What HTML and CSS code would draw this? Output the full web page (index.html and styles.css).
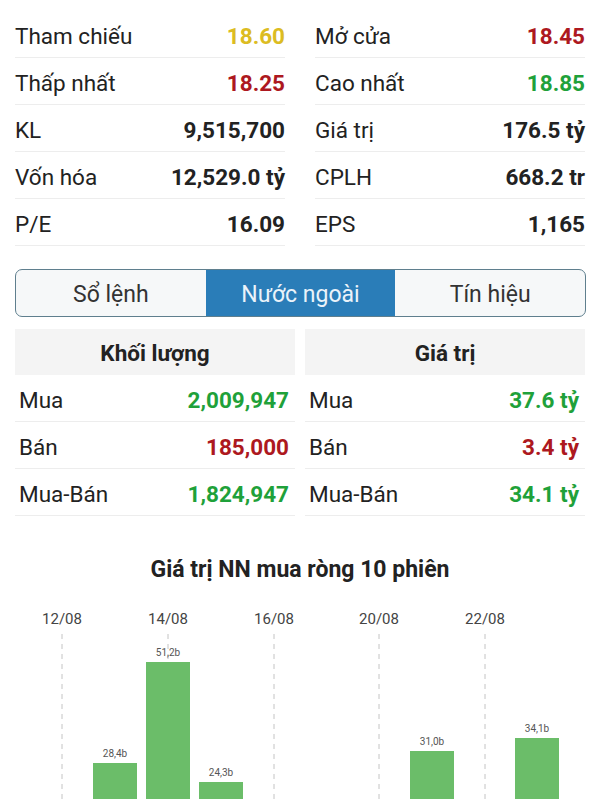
FILE: index.html
```html
<!DOCTYPE html>
<html lang="vi">

<head>
    <meta charset="UTF-8">
    <meta name="viewport" content="width=device-width, initial-scale=1.0">
    <title>Chi tiết cổ phiếu</title>
    <link rel="stylesheet" href="styles.css">
</head>

<body>
    <!-- thông tin giá -->
    <div class="stats">
        <div class="col">
            <div class="row"><span>Tham chiếu</span><b class="ref">18.60</b></div>
            <div class="row"><span>Thấp nhất</span><b class="down">18.25</b></div>
            <div class="row"><span>KL</span><b>9,515,700</b></div>
            <div class="row"><span>Vốn hóa</span><b>12,529.0 tỷ</b></div>
            <div class="row"><span>P/E</span><b>16.09</b></div>
        </div>
        <div class="col">
            <div class="row"><span>Mở cửa</span><b class="down">18.45</b></div>
            <div class="row"><span>Cao nhất</span><b class="up">18.85</b></div>
            <div class="row"><span>Giá trị</span><b>176.5 tỷ</b></div>
            <div class="row"><span>CPLH</span><b>668.2 tr</b></div>
            <div class="row"><span>EPS</span><b>1,165</b></div>
        </div>
    </div>

    <!-- tab -->
    <div class="tabs">
        <a href="javascript:;">Sổ lệnh</a>
        <a href="javascript:;" class="active">Nước ngoài</a>
        <a href="javascript:;">Tín hiệu</a>
    </div>

    <!-- nước ngoài -->
    <div class="foreign">
        <div class="col">
            <div class="head">Khối lượng</div>
            <div class="row"><span>Mua</span><b class="up">2,009,947</b></div>
            <div class="row"><span>Bán</span><b class="down">185,000</b></div>
            <div class="row"><span>Mua-Bán</span><b class="up">1,824,947</b></div>
        </div>
        <div class="col">
            <div class="head">Giá trị</div>
            <div class="row"><span>Mua</span><b class="up">37.6 tỷ</b></div>
            <div class="row"><span>Bán</span><b class="down">3.4 tỷ</b></div>
            <div class="row"><span>Mua-Bán</span><b class="up">34.1 tỷ</b></div>
        </div>
    </div>

    <!-- biểu đồ -->
    <div class="chart">
        <h3>Giá trị NN mua ròng 10 phiên</h3>
        <svg class="plot" viewBox="0 590 600 210" width="600" height="210">
            <g class="dates">
                <text x="62" y="625">12/08</text>
                <text x="168" y="625">14/08</text>
                <text x="274" y="625">16/08</text>
                <text x="379" y="625">20/08</text>
                <text x="485" y="625">22/08</text>
            </g>
            <g class="grid">
                <line x1="62" y1="635" x2="62" y2="800"></line>
                <line x1="168" y1="635" x2="168" y2="800"></line>
                <line x1="274" y1="635" x2="274" y2="800"></line>
                <line x1="379" y1="635" x2="379" y2="800"></line>
                <line x1="485" y1="635" x2="485" y2="800"></line>
            </g>
            <g class="bars">
                <rect x="93" y="764" width="44" height="126"></rect>
                <rect x="146" y="663" width="44" height="227"></rect>
                <rect x="199" y="783" width="44" height="107"></rect>
                <rect x="410" y="752" width="44" height="138"></rect>
                <rect x="515" y="739" width="44" height="151"></rect>
            </g>
            <g class="labels">
                <text x="115" y="758">28,4b</text>
                <text x="168" y="657">51,2b</text>
                <text x="221" y="777">24,3b</text>
                <text x="432" y="746">31,0b</text>
                <text x="537" y="733">34,1b</text>
            </g>
        </svg>
    </div>
</body>

</html>
```
FILE: styles.css
```css
* {
    margin: 0;
    padding: 0;
    box-sizing: border-box;
}

body {
    width: 600px;
    font-family: Roboto, "Noto Sans", sans-serif;
    color: #222;
    background-color: #fff;
}

a {
    text-decoration: none;
    color: inherit;
}

.up {
    color: #1fa13a;
}

.down {
    color: #ad1820;
}

.ref {
    color: #dcbc22;
}

/* thông tin giá */
.stats {
    display: grid;
    grid-template-columns: 1fr 1fr;
    column-gap: 30px;
    padding: 11px 15px 0;
}

.row {
    display: flex;
    justify-content: space-between;
    align-items: center;
    height: 47px;
    padding-top: 3px;
    border-bottom: 1px solid #ededed;
    font-size: 22.5px;
}

.row b {
    font-weight: 700;
}

/* tab */
.tabs {
    display: flex;
    height: 48px;
    margin: 23px 14px 0 15px;
    border: 1.5px solid #5f7f8e;
    border-radius: 7px;
    overflow: hidden;
    background-color: #f6f8f9;
}

.tabs a {
    flex: 1;
    display: flex;
    justify-content: center;
    align-items: center;
    padding-top: 3px;
    font-size: 23px;
    color: #333;
}

.tabs .active {
    background-color: #2a7db8;
    color: #eaf3fa;
}

/* nước ngoài */
.foreign {
    display: grid;
    grid-template-columns: 1fr 1fr;
    column-gap: 10px;
    padding: 12px 15px 0;
}

.foreign .head {
    height: 46px;
    line-height: 48px;
    text-align: center;
    font-size: 22.5px;
    font-weight: 700;
    background-color: #f4f4f4;
}

.foreign .row {
    padding: 3px 6px 0 4px;
}

/* biểu đồ */
.chart h3 {
    margin-top: 42px;
    line-height: 24px;
    text-align: center;
    font-size: 23px;
    font-weight: 700;
    color: #222;
}

.plot {
    display: block;
    margin-top: 7px;
}

.dates text {
    font-size: 15px;
    fill: #444;
    text-anchor: middle;
}

.grid line {
    stroke: #c4c4c4;
    stroke-width: 1;
    stroke-dasharray: 5 5;
}

.bars rect {
    fill: #6bbd69;
}

.labels text {
    font-size: 10px;
    fill: #555;
    text-anchor: middle;
}
```
